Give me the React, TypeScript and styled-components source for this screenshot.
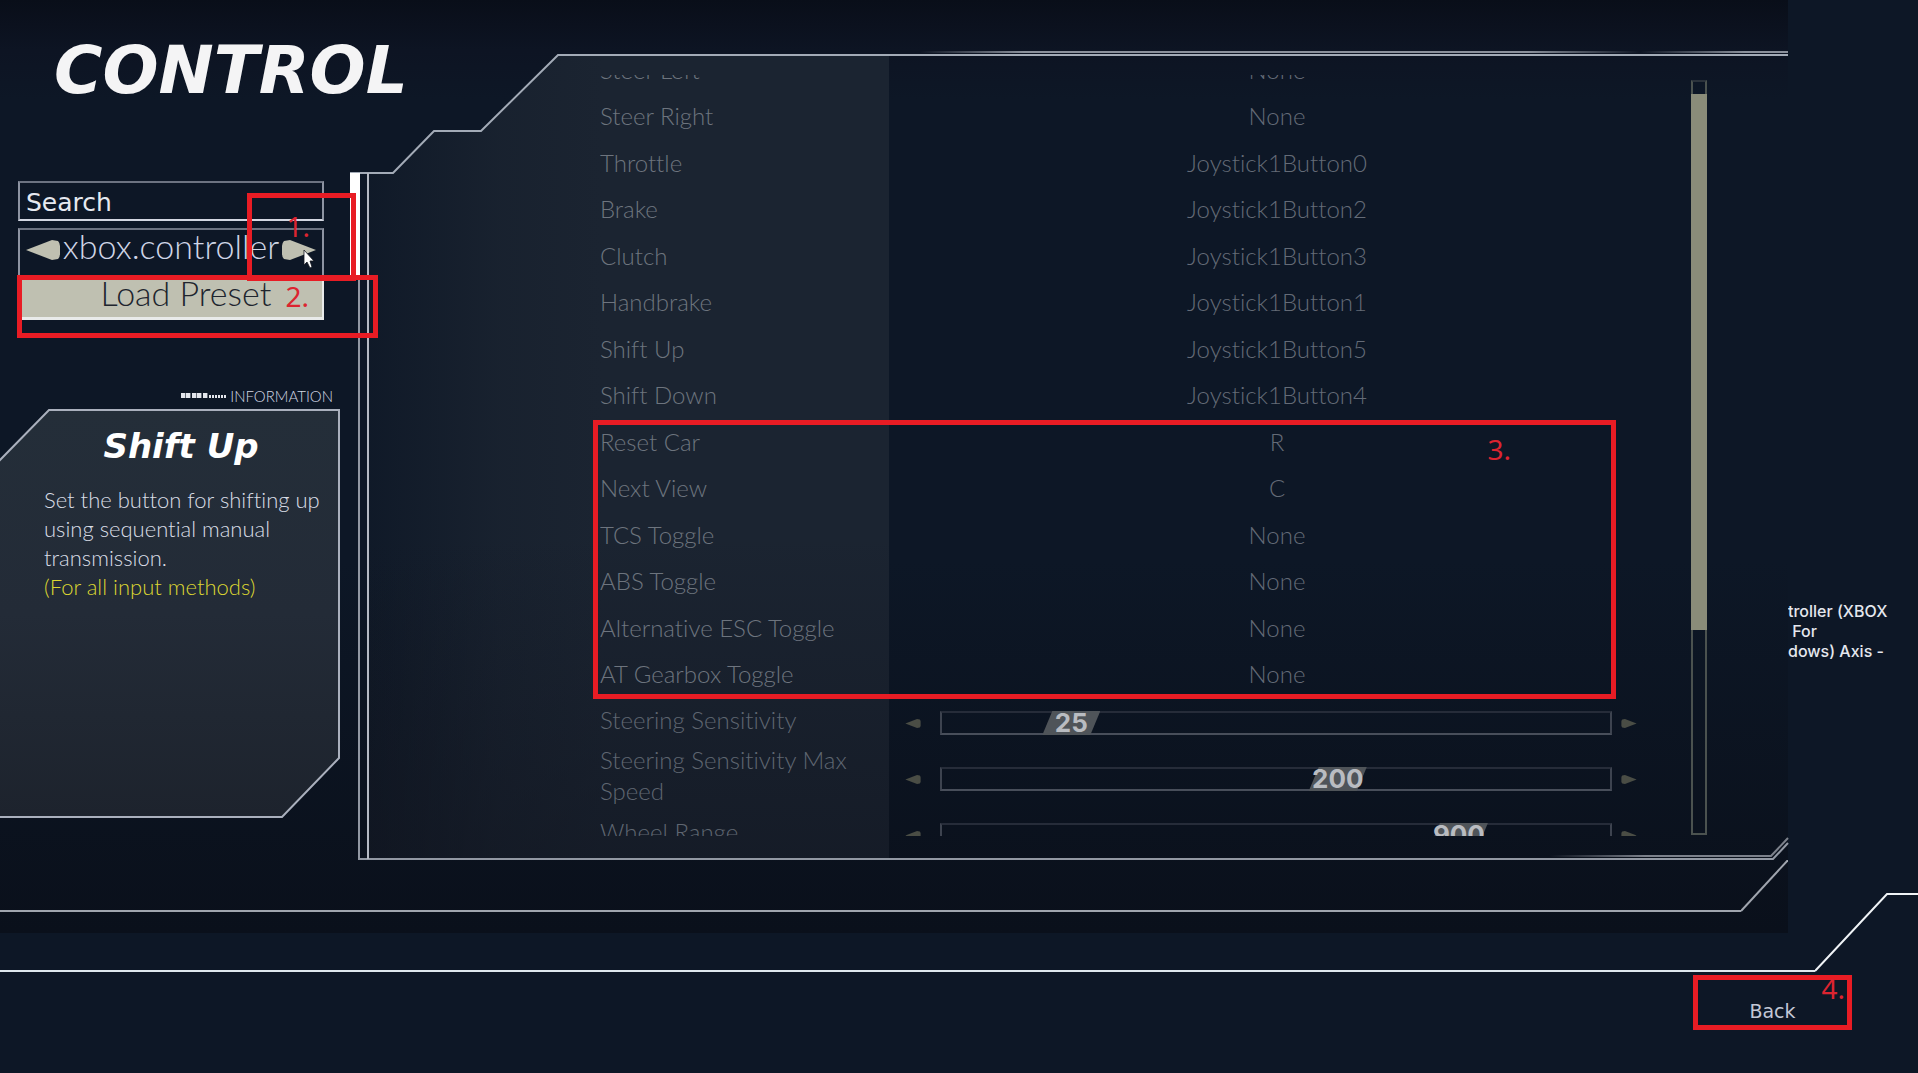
import React, { useState } from "react";
import styled, { createGlobalStyle } from "styled-components";

const body = `Lato, "Open Sans", sans-serif`;
const wide = `"DejaVu Sans", sans-serif`;
const digits = `Inter, sans-serif`;

const GlobalStyle = createGlobalStyle`
  * { box-sizing: border-box; }
  body { margin: 0; background: #0d1726; color: #d4d8e2; font-family: ${body}; font-variant-ligatures: none; }
  button, input { font: inherit; color: inherit; border: 0; padding: 0; background: none; }
  h1, h2, p { margin: 0; }
`;

/* ---------- page skeleton ---------- */

const Page = styled.div`
  position: relative;
  display: flex;
  flex-direction: column;
  height: 100vh;
  min-height: 900px;
  overflow: hidden;
`;

const Upper = styled.div`
  flex: 1;
  min-height: 0;
  display: grid;
  grid-template-columns: 1fr 130px;
`;

const Screen = styled.main`
  display: grid;
  grid-template-rows: 1fr 73px;
  min-height: 0;
  background: linear-gradient(#090e19 0, #0d1423 50px, #0d1726 100px, #0d1726 60%, #0a101b 100%);
`;

const Columns = styled.div`
  display: grid;
  grid-template-columns: 350px 1fr;
  min-height: 0;
`;

const Footer = styled.footer`
  position: relative;
  height: 140px;
  display: flex;
  justify-content: flex-end;
  align-items: flex-start;
  padding: 42px 66px 0 0;
`;

const BackButton = styled.button`
  width: 159px;
  height: 55px;
  padding-top: 16px;
  font-family: ${wide};
  font-size: 19px;
  line-height: 20px;
  color: #c3c8d6;
`;

/* ---------- rules with a slanted end ---------- */

const ScreenRule = styled.div`
  display: flex;
  height: 52px;
`;

const FooterRule = styled.div`
  position: absolute;
  left: 0;
  right: 0;
  bottom: 101px;
  height: 80px;
  display: flex;
  pointer-events: none;
`;

const Line = styled.div<{ $color: string }>`
  flex: 1;
  border-bottom: 2px solid ${(p) => p.$color};
`;

/* ---------- annotations ---------- */

const Mark = styled.div<{ $left?: number; $right?: number; $top: number; $width?: number; $height: number }>`
  position: absolute;
  z-index: 3;
  left: ${(p) => (p.$left === undefined ? "auto" : p.$left + "px")};
  right: ${(p) => (p.$right === undefined ? "auto" : p.$right + "px")};
  top: ${(p) => p.$top}px;
  width: ${(p) => (p.$width === undefined ? "auto" : p.$width + "px")};
  height: ${(p) => p.$height}px;
  border: 5px solid #e81c24;
  pointer-events: none;
`;

const MarkLabel = styled.span<{ $right: number; $top: number }>`
  position: absolute;
  right: ${(p) => p.$right}px;
  top: ${(p) => p.$top}px;
  font-family: "Noto Sans", sans-serif;
  font-size: 28px;
  line-height: 28px;
  color: #dc2430;
`;

/* ---------- sidebar ---------- */

const Sidebar = styled.section`
  position: relative;
  z-index: 1;
  display: flex;
  flex-direction: column;
  padding: 39px 0 43px;
  min-height: 0;
`;

const Title = styled.h1`
  padding-left: 54px;
  height: 142px;
  font-family: ${wide};
  font-style: italic;
  font-weight: 700;
  font-size: 66px;
  line-height: 64px;
  white-space: nowrap;
  color: #f4f4f5;
`;

const Controls = styled.div`
  display: flex;
  flex-direction: column;
  width: 306px;
  margin-left: 18px;
`;

const frame = `
  border: 2px solid #8d94a2;
  border-top-color: #6c7381;
  border-bottom-color: #d3d7e1;
`;

const SearchBox = styled.input`
  ${frame}
  height: 40px;
  margin-bottom: 7px;
  padding: 2px 6px 0;
  font-family: ${wide};
  font-size: 25px;
  color: #e6e9f0;
  &::placeholder { color: #e6e9f0; opacity: 1; }
`;

const Preset = styled.div`
  ${frame}
  display: flex;
  align-items: center;
  justify-content: space-between;
  height: 49px;
  padding: 0 6px 6px;
`;

const PresetName = styled.output`
  padding-bottom: 8px;
  font-size: 34px;
  line-height: 36px;
  font-weight: 300;
  color: #cfd5e6;
`;

const ArrowButton = styled.button`
  display: flex;
  flex: none;
  cursor: pointer;
`;

const LoadButton = styled.button`
  height: 43px;
  padding: 0 0 8px 32px;
  border: solid #e9ebea;
  border-width: 0 2px 3px 0;
  background: #bfc0b1;
  font-size: 34px;
  line-height: 32px;
  font-weight: 300;
  color: #20252e;
`;

const Pointer = styled.svg`
  position: absolute;
  z-index: 4;
  left: 303px;
  top: 249px;
`;

const InfoTag = styled.div`
  display: flex;
  justify-content: flex-end;
  align-items: center;
  gap: 4px;
  padding-right: 17px;
  margin: 66px 0 4px;
  font-size: 15px;
  line-height: 20px;
  font-weight: 300;
  color: #d3d8e4;
`;

const InfoCard = styled.article`
  position: relative;
  flex: 1;
  width: 340px;
  padding: 19px 0 0 44px;
`;

const Backdrop = styled.svg`
  position: absolute;
  inset: 0;
  width: 100%;
  height: 100%;
  overflow: visible;
  pointer-events: none;
`;

const InfoTitle = styled.h2`
  position: relative;
  padding-right: 22px;
  margin-bottom: 22px;
  text-align: center;
  font-family: ${wide};
  font-style: italic;
  font-weight: 700;
  font-size: 34px;
  line-height: 34px;
  color: #fff;
`;

const InfoText = styled.p<{ $note?: boolean }>`
  position: relative;
  font-size: 22px;
  line-height: 29px;
  font-weight: 300;
  color: ${(p) => (p.$note ? "#dcd632" : "#d9dde6")};
`;

/* ---------- settings panel ---------- */

const Panel = styled.section`
  position: relative;
  display: flex;
  gap: 25px;
  min-height: 0;
  margin-top: 50px;
  padding: 25px 81px 24px 250px;
`;

const List = styled.div`
  position: relative;
  flex: 1;
  min-width: 0;
  overflow: hidden;
`;

/* The list is scrolled part-way through its first row. */
const Scrolled = styled.div`
  margin-top: -28px;
`;

const Bindings = styled.div`
  display: grid;
  grid-auto-rows: 1fr;
  height: 651px;
`;

const Row = styled.div`
  display: grid;
  grid-template-columns: 288px 1fr;
  align-items: center;
  font-size: 24px;
  line-height: 31px;
  font-weight: 300;
`;

const SliderRow = styled(Row)`
  min-height: 50px;
`;

const Label = styled.label`
  padding-bottom: 2px;
  color: #6d747e;
`;

const SliderLabel = styled(Label)`
  margin: -4px 0 0;
  padding-bottom: 4px;
  color: #5f6671;
`;

const KeyButton = styled.button`
  padding-bottom: 2px;
  text-align: center;
  font-weight: 300;
  color: #646b77;
`;

const SliderCell = styled.div`
  display: flex;
  align-items: center;
  padding: 0 29px 0 17px;
`;

const Track = styled.div`
  position: relative;
  flex: 1;
  height: 24px;
  margin: 0 9px 0 19px;
  border: 2px solid #3d434f;
  border-top-color: #262c39;
  border-bottom-color: #484e5a;
`;

const Range = styled.input`
  position: absolute;
  inset: 0;
  width: 100%;
  height: 100%;
  margin: 0;
  opacity: 0;
`;

const ThumbLane = styled.div`
  position: absolute;
  inset: -2px 56px -2px -2px;
  pointer-events: none;
`;

const Thumb = styled.output`
  position: absolute;
  z-index: 0;
  top: 0;
  width: 58px;
  height: 24px;
  text-align: center;
  font-family: ${digits};
  font-weight: 700;
  font-size: 26px;
  line-height: 24px;
  color: #b9bcc1;

  &::before {
    content: "";
    position: absolute;
    inset: 0;
    z-index: -1;
    background: #4f5459;
    clip-path: polygon(10px 0, 100% 0, calc(100% - 10px) 100%, 0 100%);
  }
`;

const ScrollTrack = styled.div`
  width: 16px;
  margin: 5px 0 1px;
  padding-top: 12px;
  border: 2px solid #4b524f;
  border-top-color: #2b323b;
`;

const ScrollThumb = styled.div`
  height: calc(72% + 4px);
  margin: 0 -2px;
  background: #8a8c79;
`;

function Arrow({ back, size = 34, color = "#bfc0b1" }: { back?: boolean; size?: number; color?: string }) {
  const d = back ? "M0 10 26 0 32 1Q34 3 34 6V14Q34 17 32 19L26 20Z" : "M34 10 8 0 2 1Q0 3 0 6V14Q0 17 2 19L8 20Z";
  return (
    <svg width={size} height={Math.round((size * 20) / 34)} viewBox="0 0 34 20" aria-hidden="true">
      <path d={d} fill={color} />
    </svg>
  );
}

const bindings: [string, string][] = [
  ["Steer Left", "None"],
  ["Steer Right", "None"],
  ["Throttle", "Joystick1Button0"],
  ["Brake", "Joystick1Button2"],
  ["Clutch", "Joystick1Button3"],
  ["Handbrake", "Joystick1Button1"],
  ["Shift Up", "Joystick1Button5"],
  ["Shift Down", "Joystick1Button4"],
  ["Reset Car", "R"],
  ["Next View", "C"],
  ["TCS Toggle", "None"],
  ["ABS Toggle", "None"],
  ["Alternative ESC Toggle", "None"],
  ["AT Gearbox Toggle", "None"],
];

const sliders = [
  { label: "Steering Sensitivity", value: 25, max: 150 },
  { label: "Steering Sensitivity Max Speed", value: 200, max: 333 },
  { label: "Wheel Range", value: 900, max: 1128 },
];

function SliderSetting({ label, value, max }: { label: string; value: number; max: number }) {
  const [v, setV] = useState(value);
  const id = label.replace(/ /g, "-").toLowerCase();
  return (
    <SliderRow>
      <SliderLabel htmlFor={id}>{label}</SliderLabel>
      <SliderCell>
        <ArrowButton aria-label={`Decrease ${label}`} onClick={() => setV(Math.max(0, v - 1))}>
          <Arrow back size={16} color="#4a4d45" />
        </ArrowButton>
        <Track>
          <Range id={id} type="range" min={0} max={max} value={v} onChange={(e) => setV(Number(e.target.value))} />
          <ThumbLane>
            <Thumb htmlFor={id} style={{ left: `${(v / max) * 100}%` }}>{v}</Thumb>
          </ThumbLane>
        </Track>
        <ArrowButton aria-label={`Increase ${label}`} onClick={() => setV(Math.min(max, v + 1))}>
          <Arrow size={16} color="#4a4d45" />
        </ArrowButton>
      </SliderCell>
    </SliderRow>
  );
}

function PanelFrame() {
  return (
    <Backdrop viewBox="0 0 1438 810" preserveAspectRatio="none" aria-hidden="true">
      <defs>
        <linearGradient id="side" x1="0" x2="1" y1="0" y2="0">
          <stop offset="0" stopColor="#1b2431" stopOpacity="0.2" />
          <stop offset="0.25" stopColor="#1b2431" stopOpacity="0.8" />
          <stop offset="0.45" stopColor="#1b2431" />
        </linearGradient>
        <linearGradient id="shade" x1="0" x2="0" y1="0" y2="1">
          <stop offset="0.6" stopColor="#121722" stopOpacity="0" />
          <stop offset="1" stopColor="#121722" stopOpacity="0.65" />
        </linearGradient>
        <linearGradient id="topLine" gradientUnits="userSpaceOnUse" x1="570" x2="1438" y1="0" y2="0">
          <stop offset="0" stopColor="#8b919c" stopOpacity="0" />
          <stop offset="0.12" stopColor="#8b919c" />
          <stop offset="0.7" stopColor="#8b919c" />
          <stop offset="0.83" stopColor="#8b919c" stopOpacity="0" />
          <stop offset="0.95" stopColor="#8b919c" />
        </linearGradient>
        <linearGradient id="bottomLine" gradientUnits="userSpaceOnUse" x1="1200" x2="1438" y1="0" y2="0">
          <stop offset="0" stopColor="#7c818b" stopOpacity="0" />
          <stop offset="0.4" stopColor="#7c818b" />
        </linearGradient>
      </defs>
      <path d="M18 123H43L84 81H131L208 5H539V808H18Z" fill="url(#side)" />
      <path d="M18 123H43L84 81H131L208 5H539V808H18Z" fill="url(#shade)" />
      <g fill="none" strokeWidth="2">
        <path d="M0 123H43L84 81H131L208 5H1438" stroke="#a3abb7" />
        <path d="M570 2H1438" stroke="url(#topLine)" />
        <path d="M9 123V809H1423L1438 793" stroke="#9298a3" />
        <path d="M18 123V809" stroke="#b5bac4" />
        <path d="M1200 806H1421L1438 788" stroke="url(#bottomLine)" />
      </g>
      <rect x="0" y="123" width="10" height="102" fill="#fff" />
    </Backdrop>
  );
}

const Overheard = styled.aside`
  overflow: hidden;
  padding-top: 601px;
  font-family: ${digits};
  font-weight: 500;
  font-size: 16px;
  line-height: 20px;
  white-space: pre;
  color: #e4e7ee;
`;

export default function App() {
  const [search, setSearch] = useState("");
  return (
    <Page>
      <GlobalStyle />
      <Upper>
        <Screen>
          <Columns>
            <Sidebar>
              <Title>CONTROL</Title>
              <Controls>
                <SearchBox
                  aria-label="Search"
                  placeholder="Search"
                  value={search}
                  onChange={(e) => setSearch(e.target.value)}
                />
                <Preset>
                  <ArrowButton aria-label="Previous preset"><Arrow back /></ArrowButton>
                  <PresetName>xbox.controller</PresetName>
                  <ArrowButton aria-label="Next preset"><Arrow /></ArrowButton>
                </Preset>
                <LoadButton>Load Preset</LoadButton>
              </Controls>
              <InfoTag>
                <svg width="45" height="6" viewBox="0 0 45 6" fill="#e3e6ec" aria-hidden="true">
                  {[0, 5, 11, 16, 22].map((x) => <rect key={x} x={x} y="0" width="4.4" height="5" />)}
                  {[28, 31, 34, 37, 40, 43].map((x) => <rect key={x} x={x} y="2" width="2" height="3" />)}
                </svg>
                INFORMATION
              </InfoTag>
              <InfoCard>
                <Backdrop viewBox="0 0 340 407" preserveAspectRatio="none" aria-hidden="true">
                  <defs>
                    <linearGradient id="card" x1="0" x2="0" y1="0" y2="1">
                      <stop offset="0" stopColor="#242e39" />
                      <stop offset="0.5" stopColor="#232b37" />
                      <stop offset="1" stopColor="#1d232d" />
                    </linearGradient>
                  </defs>
                  <path d="M-2 52 49 0H339V348L282 407H-2Z" fill="url(#card)" stroke="#aab0bd" strokeWidth="2" />
                </Backdrop>
                <InfoTitle>Shift Up</InfoTitle>
                <InfoText>Set the button for shifting up using sequential manual transmission.</InfoText>
                <InfoText $note>(For all input methods)</InfoText>
              </InfoCard>

              <Mark $left={247} $top={193} $width={109} $height={88}>
                <MarkLabel $right={41} $top={14}>1.</MarkLabel>
              </Mark>
              <Mark $left={17} $top={275} $width={361} $height={63}>
                <MarkLabel $right={64} $top={2}>2.</MarkLabel>
              </Mark>
              <Pointer width="12" height="20" viewBox="0 0 12 20" aria-hidden="true">
                <path d="M1 1V16L4 13 7 19 9 18 7 12H11Z" fill="#fff" stroke="#15181f" strokeWidth="0.8" />
              </Pointer>
            </Sidebar>

            <Panel>
              <PanelFrame />
              <List>
                <Scrolled>
                  <Bindings>
                    {bindings.map(([name, key]) => (
                      <Row key={name}>
                        <Label htmlFor={name}>{name}</Label>
                        <KeyButton id={name}>{key}</KeyButton>
                      </Row>
                    ))}
                  </Bindings>
                  {sliders.map((s) => <SliderSetting key={s.label} {...s} />)}
                </Scrolled>
              </List>
              <ScrollTrack><ScrollThumb /></ScrollTrack>
              <Mark $left={243} $right={172} $top={370} $height={279}>
                <MarkLabel $right={100} $top={10}>3.</MarkLabel>
              </Mark>
            </Panel>
          </Columns>
          <ScreenRule>
            <Line $color="#a0a5ae" />
            <svg width="47" height="52" viewBox="0 0 47 52" fill="none" aria-hidden="true">
              <path d="M0 51 47 0" stroke="#a0a5ae" strokeWidth="2" />
            </svg>
          </ScreenRule>
        </Screen>
        <Overheard>{"troller (XBOX\n For\ndows) Axis -"}</Overheard>
      </Upper>
      <Footer>
        <FooterRule>
          <Line $color="#dfe8ee" />
          <svg width="103" height="80" viewBox="0 0 103 80" fill="none" aria-hidden="true">
            <path d="M0 79 72 2H103" stroke="#f0f4f7" strokeWidth="2" />
          </svg>
        </FooterRule>
        <BackButton>Back</BackButton>
        <Mark $right={66} $top={42} $width={159} $height={55}>
          <MarkLabel $right={2} $top={-6}>4.</MarkLabel>
        </Mark>
      </Footer>
    </Page>
  );
}
